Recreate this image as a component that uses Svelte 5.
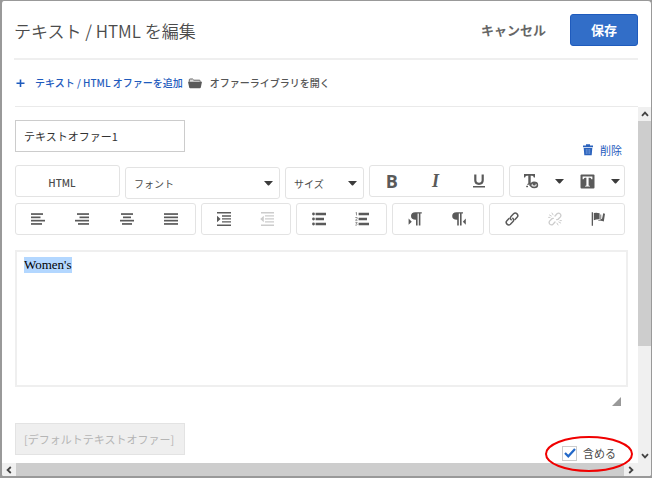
<script>
  let name = $state('テキストオファー1');
  let include = $state(true);
</script>

{#snippet caret()}
  <svg class="caret" width="9" height="5" viewBox="0 0 9 5" aria-hidden="true"><path d="M0 0H9L5.2 4.2Q4.5 5 3.8 4.2Z" fill="#3c3c3c" /></svg>
{/snippet}

{#snippet lines(rows)}
  <svg width="14" height="14" viewBox="0 0 14 14" aria-hidden="true">
    {#each rows as [x, w], i}
      <rect {x} y={1.2 + i * 3.3} width={w} height="1.7" />
    {/each}
  </svg>
{/snippet}

<main class="dialog">
  <header>
    <h1>テキスト / HTML を編集</h1>
    <button class="cancel" type="button">キャンセル</button>
    <button class="save" type="button">保存</button>
  </header>

  <nav>
    <a class="add" href="#add">
      <svg width="9" height="9" viewBox="0 0 9 9" aria-hidden="true"><path d="M4.5 .5V8M.5 4.3H8.5" stroke="#1f5bbd" stroke-width="1.6" /></svg>
      <span>テキスト / HTML オファーを追加</span>
    </a>
    <a class="library" href="#library">
      <svg width="14" height="11" viewBox="0 0 14 11" aria-hidden="true">
        <path d="M1.3 3.8V1.8Q1.3 1 2.2 1H4.6L5.8 2.2H11.3Q12.2 2.2 12.2 3V3.8" fill="#ddd" stroke="#666" />
        <path d="M0 3.8H14L12.8 9.4Q12.6 10.2 11.8 10.2H2.2Q1.4 10.2 1.2 9.4Z" fill="#5a5a5a" />
      </svg>
      <span>オファーライブラリを開く</span>
    </a>
  </nav>

  <div class="pane">
    <section class="content">
      <div class="offer">
        <input class="field" type="text" aria-label="オファー名" bind:value={name} />
        <a class="delete" href="#delete">
          <svg width="10" height="12" viewBox="0 0 10 12" aria-hidden="true">
            <path d="M0 1.6H3V.3H7V1.6H10V3.2H0ZM.7 4H9.3L8.7 11.2H1.3Z" fill="#2a62bd" />
            <path d="M3.3 5V10M5 5V10M6.7 5V10" stroke="#8fb0e2" stroke-width=".6" />
          </svg>
          <span>削除</span>
        </a>
      </div>

      <div class="toolbar">
        <div class="row">
          <button class="html" type="button"><span>HTML</span></button>
          <div class="select font">
            <select aria-label="フォント"><option>フォント</option></select>
            {@render caret()}
          </div>
          <div class="select size">
            <select aria-label="サイズ"><option>サイズ</option></select>
            {@render caret()}
          </div>
          <div class="group three">
            <button type="button" aria-label="太字"><b>B</b></button>
            <button type="button" aria-label="斜体"><i>I</i></button>
            <button type="button" aria-label="下線">
              <svg width="14" height="14" viewBox="0 0 14 14" aria-hidden="true"><path d="M3.3 .5V6.3Q3.3 9.8 7 9.8Q10.7 9.8 10.7 6.3V.5" fill="none" stroke="#5a5a5a" stroke-width="2.2" /><rect x="1" y="12" width="12" height="1.5" /></svg>
            </button>
          </div>
          <div class="group colors">
            <button type="button" aria-label="文字の色">
              <svg width="16" height="16" viewBox="0 0 16 16" aria-hidden="true">
                <path d="M1 1H12V4.4H10.8Q10.6 2.7 9.2 2.7H7.7V10.2L8.6 11V11.8H4.2V11L5.3 10.4V2.7H3.8Q2.3 2.7 2.1 4.4H1Z" />
                <path d="M6.2 12.5Q8 8.6 11 8.6Q15.2 8.6 15.2 12Q15.2 15.2 11.4 15.2Q8.2 15.2 6.2 12.5Z" />
                <path d="M8.2 12.2Q8.8 10.8 9.6 10.4Q9.3 12.5 11.3 12.5Q12.9 12.3 12.8 10.4Q13.8 11 13.8 12Q13.5 13.8 11.3 13.8Q9.3 13.8 8.2 12.2Z" fill="#fff" fill-opacity=".8" />
                <rect x="3.2" y="12.8" width="1.8" height="1.4" />
              </svg>
            </button>
            <button class="drop" type="button" aria-label="文字の色を選択">{@render caret()}</button>
            <button type="button" aria-label="背景色">
              <svg width="15" height="15" viewBox="0 0 15 15" aria-hidden="true">
                <rect x=".5" y=".5" width="14" height="14" rx="1" />
                <path d="M2.6 2.5H12.4V5.3H11.4Q11.2 3.8 10 3.8H8.6V11.4L10 11.9V12.6H5V11.9L6.4 11.4V3.8H5Q3.8 3.8 3.6 5.3H2.6Z" fill="#fff" />
              </svg>
            </button>
            <button class="drop" type="button" aria-label="背景色を選択">{@render caret()}</button>
          </div>
        </div>

        <div class="row">
          <div class="group four">
            <button type="button" aria-label="左揃え">{@render lines([[0, 12], [0, 9.5], [0, 14], [0, 11]])}</button>
            <button type="button" aria-label="右揃え">{@render lines([[2, 12], [4.5, 9.5], [0, 14], [3, 11]])}</button>
            <button type="button" aria-label="中央揃え">{@render lines([[1, 12], [3, 8], [0, 14], [2, 10]])}</button>
            <button type="button" aria-label="両端揃え">{@render lines([[0, 14], [0, 14], [0, 14], [0, 14]])}</button>
          </div>
          <div class="group two">
            <button type="button" aria-label="インデント">
              <svg width="14" height="14" viewBox="0 0 14 14" aria-hidden="true"><path d="M0 0H14V1.5H0ZM0 12.5H14V14H0ZM5 3.3H14V4.7H5ZM5 6.2H14V7.6H5ZM5 9.2H14V10.6H5ZM0 3.8L3.6 7L0 10.2Z" /></svg>
            </button>
            <button class="off" type="button" aria-label="インデント解除" disabled>
              <svg width="14" height="14" viewBox="0 0 14 14" aria-hidden="true"><path d="M1 0H14V1.4H1ZM1 12.5H14V13.9H1ZM5 3.3H14V4.6H5ZM5 6.2H14V7.5H5ZM5 9.2H14V10.5H5ZM3.8 3.8L.2 7L3.8 10.2Z" /></svg>
            </button>
          </div>
          <div class="group lists">
            <button type="button" aria-label="箇条書き">
              <svg width="14" height="14" viewBox="0 0 14 14" aria-hidden="true"><path d="M3.6 .8H14V3.2H3.6ZM3.6 5.8H12V8.2H3.6ZM3.6 10.8H14V13.2H3.6Z" /><circle cx="1.5" cy="2" r="1.4" /><circle cx="1.5" cy="7" r="1.4" /><circle cx="1.5" cy="12" r="1.4" /></svg>
            </button>
            <button type="button" aria-label="番号付きリスト">
              <svg width="14" height="14" viewBox="0 0 14 14" aria-hidden="true"><path d="M3.6 .8H14V3.2H3.6ZM3.6 5.8H12V8.2H3.6ZM3.6 10.8H14V13.2H3.6Z" /><path d="M.6 .8L1.5 .4V3.4M.3 5.5H2.2V6.5L.5 8.3H2.5M.4 10.4H2.2L1.2 11.6Q2.3 11.7 2.2 12.5Q2 13.3 .3 13.1" fill="none" stroke="#777" stroke-width=".8" /></svg>
            </button>
          </div>
          <div class="group dirs">
            <button type="button" aria-label="左から右">
              <svg width="14" height="14" viewBox="0 0 14 14" aria-hidden="true"><path d="M13.8 .2V1.5H12.4V13.6H10.8V1.5H9.6V13.6H8V7.8Q3 7.9 3 4Q3 .2 7.3 .2ZM.6 6.6L3.8 9.7L.6 12.8Z" /></svg>
            </button>
            <button type="button" aria-label="右から左">
              <svg width="14" height="14" viewBox="0 0 14 14" aria-hidden="true"><path d="M11 .2V1.5H9.6V13.6H8V1.5H6.8V13.6H5.2V7.8Q.2 7.9 .2 4Q.2 .2 4.5 .2ZM13.8 6.6L10.8 9.7L13.8 12.8Z" /></svg>
            </button>
          </div>
          <div class="group links">
            <button type="button" aria-label="リンク">
              <svg width="14" height="14" viewBox="0 0 14 14" aria-hidden="true"><g fill="none" stroke="#5a5a5a" stroke-width="1.5" stroke-linecap="round"><path d="M6.2 7.8Q4.4 6 6.2 4.2L8.6 1.8Q10.3 .2 12 1.9Q13.7 3.6 12.1 5.3L10 7.5" /><path d="M7.8 6.2Q9.6 8 7.8 9.8L5.4 12.2Q3.7 13.8 2 12.1Q.3 10.4 1.9 8.7L4 6.5" /></g></svg>
            </button>
            <button class="off" type="button" aria-label="リンク解除" disabled>
              <svg width="14" height="14" viewBox="0 0 14 14" aria-hidden="true"><g fill="none" stroke="#ccc" stroke-width="1.3" stroke-linecap="round"><path d="M7 4L9 1.8Q10.6 .4 12.2 1.9Q13.6 3.5 12.2 5.1L10 7.3L8.7 7.6M7 10L5 12.2Q3.4 13.6 1.8 12.1Q.4 10.5 1.8 8.9L4 6.7L5.3 6.4" /><path d="M1.5 3L3.3 4M4 1L5 2.8M.6 5.4H2M12.7 11L10.8 10M10 13L9 11.2M13.4 8.6H12" stroke-width="1" /></g></svg>
            </button>
            <button type="button" aria-label="アンカー">
              <svg width="14" height="14" viewBox="0 0 14 14" aria-hidden="true"><path d="M.7 .2H2V13.8H.7ZM2.8 1Q5.5 .2 8.6 1.2V7.4Q5.4 7.2 2.8 8.3ZM9.4 2.4L10.2 2.6V7H11L12.2 1.2L14 1.8L12.8 9.4Q10.5 8.4 7.4 9V8.2H9.4Z" /></svg>
            </button>
          </div>
        </div>
      </div>

      <div class="editor" contenteditable="true" role="textbox" tabindex="0" aria-label="オファーの内容"><mark>Women's</mark></div>
      <svg class="grip" width="9" height="9" viewBox="0 0 9 9" aria-hidden="true"><path d="M9 0V9H0Z" fill="#999" /></svg>

      <div class="default">
        <input class="field" type="text" aria-label="デフォルト" value="[デフォルトテキストオファー]" disabled />
        <label>
          <input type="checkbox" bind:checked={include} />
          <svg class="tick" width="12" height="10" viewBox="0 0 12 10" aria-hidden="true"><path d="M1 5L4.3 8.3L11 1" fill="none" stroke={include ? '#2368c8' : 'none'} stroke-width="2.2" /></svg>
          <span>含める</span>
          <svg class="ring" width="90" height="38" viewBox="0 0 90 38" aria-hidden="true"><ellipse cx="45" cy="19" rx="43" ry="17" fill="none" stroke="#f00000" stroke-width="2" /></svg>
        </label>
      </div>
    </section>

    <div class="vbar">
      <span class="arrow"><svg width="8" height="6" viewBox="0 0 8 6"><path d="M1 4.8L4 1.6L7 4.8" /></svg></span>
      <span class="thumb"></span>
      <span class="rest"></span>
      <span class="arrow"><svg width="8" height="6" viewBox="0 0 8 6"><path d="M1 1.2L4 4.4L7 1.2" /></svg></span>
    </div>
    <div class="hbar">
      <span class="arrow"><svg width="6" height="8" viewBox="0 0 6 8"><path d="M4.8 1L1.6 4L4.8 7" /></svg></span>
      <span class="thumb"></span>
      <span class="arrow"><svg width="6" height="8" viewBox="0 0 6 8"><path d="M1.2 1L4.4 4L1.2 7" /></svg></span>
    </div>
    <div class="corner"></div>
  </div>
</main>

<style>
  :global(body) { background: #999; }
  * { box-sizing: border-box; }
  .dialog {
    display: flex; flex-direction: column; min-height: 100vh;
    border: solid #999; border-width: 1px 1px 2px 2px; border-radius: 4px;
    background: #fff; color: #4b4b4b; overflow: hidden;
    font: 11px/16px "Noto Sans CJK JP", sans-serif;
  }
  button, input, select { font: inherit; color: inherit; margin: 0; padding: 0; border: 0; background: none; }
  a { text-decoration: none; }
  svg { display: block; flex: none; }
  header { display: flex; align-items: center; height: 59px; margin: 0 13px 0 12px; border-bottom: 2px solid #efefef; }
  h1 { flex: 1; margin: 0; font-size: 17px; line-height: 24px; font-weight: 350; padding-top: 2px; }
  .cancel { font-size: 13px; font-weight: 700; color: #666; margin-right: 24px; }
  .save { width: 68px; height: 32px; border: 1px solid #1f5bbd; border-radius: 3px; background: #326ec8; color: #fff; font-size: 13px; font-weight: 700; }
  nav { display: flex; align-items: center; gap: 5px; height: 47px; margin: 0 13px; border-bottom: 1px solid #eaeaea; font-size: 10px; font-weight: 500; }
  nav a { display: flex; align-items: center; }
  .add { gap: 10px; color: #1f5bbd; padding-left: 1px; }
  .library { gap: 8px; color: #555; }
  .pane { flex: 1; display: grid; grid-template-columns: 1fr 13px; grid-template-rows: 1fr 13px; }
  .content { display: flex; flex-direction: column; padding: 13px 10px 0 13px; }
  .offer { display: flex; justify-content: space-between; align-items: flex-start; height: 45px; padding-right: 6px; }
  .field { width: 170px; height: 32px; border: 1px solid #ccc; padding: 0 8px; color: #323232; }
  .field:disabled { background: #efefef; border-color: #e3e3e3; color: #b5b5b5; }
  .delete { display: flex; align-items: center; gap: 7px; color: #1f5bbd; margin-top: 22px; }
  .toolbar { display: flex; flex-direction: column; gap: 4px; }
  .row { display: flex; align-items: flex-start; gap: 5px; }
  .group, .html, select { height: 32px; border: 1px solid #e3e3e3; border-radius: 3px; background: #fff; }
  .html { width: 105px; font-size: 10px; font-weight: 500; padding: 3px 11px 0 0; }
  .select { position: relative; margin-top: 2px; }
  .select select { width: 100%; padding: 2px 8px 0; appearance: none; font-size: 10px; }
  .select .caret { position: absolute; right: 7px; top: 14px; pointer-events: none; }
  .font { width: 155px; }
  .size { width: 79px; }
  .group { display: flex; padding-right: 2px; }
  .group button { flex: 1; display: flex; align-items: center; justify-content: center; }
  .group svg { fill: #5a5a5a; }
  .group .drop { flex: none; width: 14px; }
  .group .off svg { fill: #ccc; }
  .group b { font: 700 18px/20px "Open Sans", sans-serif; color: #5a5a5a; }
  .group i { font: italic 700 18px/20px "Liberation Serif", serif; color: #5a5a5a; }
  .three { width: 135px; }
  .colors { width: 116px; }
  .four { width: 181px; }
  .two { width: 90px; }
  .lists { width: 91px; }
  .dirs { width: 92px; }
  .links { width: 136px; padding-right: 5px; }
  .editor { height: 137px; margin-top: 15px; border: 2px solid #efefef; padding: 5px 7px; font: 13px/16px "Liberation Serif", serif; color: #000; outline: 0; }
  mark { display: inline-block; background: #b3d7ff; color: inherit; }
  .grip { align-self: flex-end; margin: 10px 7px 17px 0; }
  .default { display: flex; align-items: flex-start; justify-content: space-between; padding-right: 12px; }
  label { position: relative; display: flex; align-items: center; gap: 6px; margin-top: 22px; height: 16px; }
  label input { appearance: none; width: 15px; height: 15px; border: 1px solid #ccc; background: #fff; }
  .tick { position: absolute; left: 2px; top: 3px; pointer-events: none; }
  .ring { position: absolute; left: -18px; top: -10px; z-index: 1; pointer-events: none; }
  .vbar { display: flex; flex-direction: column; background: #f0f0f0; }
  .hbar { display: flex; background: #f0f0f0; }
  .corner { background: #f0f0f0; }
  .arrow { flex: none; display: flex; align-items: center; justify-content: center; width: 14px; height: 13px; }
  .vbar .arrow { width: 13px; height: 14px; }
  .arrow path { fill: none; stroke: #444; stroke-width: 1.8; }
  .thumb { background: #cdcdcd; }
  .vbar .thumb { flex: 225; }
  .rest { flex: 103; }
  .hbar .thumb { flex: 1; }
</style>
